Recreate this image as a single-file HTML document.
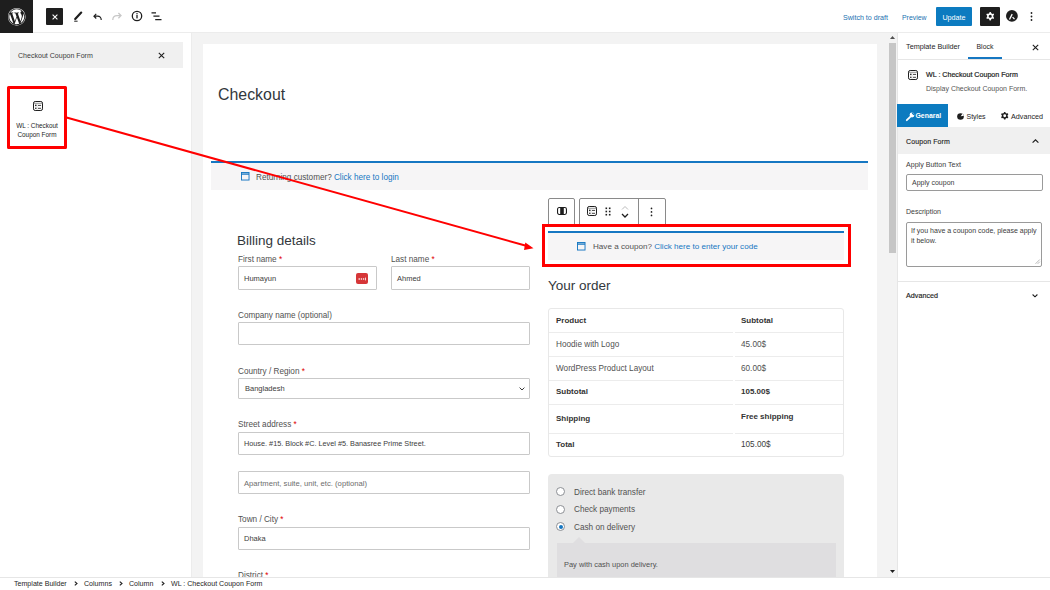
<!DOCTYPE html>
<html><head><meta charset="utf-8">
<style>
*{box-sizing:border-box;margin:0;padding:0}
html,body{width:1050px;height:590px;overflow:hidden;background:#fff;font-family:"Liberation Sans",sans-serif;color:#1e1e1e}
.a{position:absolute}
.t{position:absolute;white-space:nowrap;line-height:1}
svg{position:absolute;overflow:visible}
.inp{border:1px solid #c9c9c9;background:#fff;border-radius:1px}
.hr{left:549px;width:184px;height:1px;background:#ececec}
.hr2{position:absolute;left:735px;width:108px;height:1px;background:#ececec}
.b{font-size:8px;font-weight:bold;color:#333}
.r{font-size:8.2px;color:#515151}
.radio{width:9px;height:9px;border-radius:50%;border:1px solid #8c8f94;background:#fff}
</style></head><body>

<!-- HEADER -->
<div class="a" style="left:0;top:0;width:1050px;height:33px;background:#fff;border-bottom:1px solid #ececec"></div>
<div class="a" style="left:0;top:0;width:33px;height:33px;background:#1e1e1e"></div>
<svg style="left:8px;top:8px" width="17.5" height="17.5" viewBox="0 0 122.52 122.523"><g fill="#fff">
<path d="m8.708 61.26c0 20.802 12.089 38.779 29.619 47.298l-25.069-68.686c-2.916 6.536-4.55 13.769-4.55 21.388z"/>
<path d="m96.74 58.608c0-6.495-2.333-10.993-4.334-14.494-2.664-4.329-5.161-7.995-5.161-12.324 0-4.831 3.664-9.328 8.825-9.328.233 0 .454.029.681.042-9.35-8.566-21.807-13.796-35.489-13.796-18.36 0-34.513 9.42-43.91 23.688 1.233.037 2.395.063 3.382.063 5.497 0 14.006-.667 14.006-.667 2.833-.167 3.167 3.994.337 4.329 0 0-2.847.335-6.015.501l19.138 56.925 11.501-34.493-8.188-22.434c-2.830-.166-5.511-.501-5.511-.501-2.832-.166-2.500-4.496.332-4.329 0 0 8.679.667 13.843.667 5.496 0 14.006-.667 14.006-.667 2.835-.167 3.168 3.994.337 4.329 0 0-2.853.335-6.015.501l18.992 56.494 5.242-17.517c2.272-7.269 4.001-12.490 4.001-16.989z"/>
<path d="m62.184 65.857-15.768 45.819c4.708 1.384 9.687 2.141 14.846 2.141 6.12 0 11.989-1.058 17.452-2.979-.141-.225-.269-.464-.374-.724z"/>
<path d="m107.376 36.046c.226 1.674.354 3.471.354 5.404 0 5.333-.996 11.328-3.996 18.824l-16.053 46.413c15.624-9.111 26.133-26.038 26.133-45.426.001-9.137-2.333-17.729-6.438-25.215z"/>
<path d="m61.262 0c-33.779 0-61.262 27.481-61.262 61.26 0 33.783 27.483 61.263 61.262 61.263 33.778 0 61.265-27.48 61.265-61.263-.001-33.779-27.487-61.26-61.265-61.26zm0 119.715c-32.23 0-58.453-26.223-58.453-58.455 0-32.23 26.222-58.451 58.453-58.451 32.229 0 58.45 26.221 58.45 58.451 0 32.232-26.221 58.455-58.45 58.455z"/>
</g></svg>
<div class="a" style="left:46px;top:8px;width:17px;height:17px;background:#1e1e1e;border-radius:1px"></div>
<svg style="left:51.5px;top:13.5px" width="6" height="6" viewBox="0 0 6 6"><path d="M0.6 0.6L5.4 5.4M5.4 0.6L0.6 5.4" stroke="#fff" stroke-width="1.1"/></svg>
<!-- pencil -->
<svg style="left:73px;top:11px" width="10" height="11" viewBox="0 0 10 11"><path d="M2.2 8 L8.2 1.6" stroke="#1e1e1e" stroke-width="2.2" stroke-linecap="round"/><path d="M1.2 10.2 H4.6" stroke="#1e1e1e" stroke-width="1"/></svg>
<!-- undo -->
<svg style="left:93.3px;top:12.6px" width="9" height="8" viewBox="0 0 10 9"><path d="M9.2 8 C9.2 5 7.6 3.6 5 3.6 H1.2 M3.6 1 L1 3.6 L3.6 6.2" fill="none" stroke="#1e1e1e" stroke-width="1.3"/></svg>
<!-- redo -->
<svg style="left:112px;top:12px" width="10" height="9" viewBox="0 0 10 9"><path d="M0.8 8 C0.8 5 2.4 3.6 5 3.6 H8.8 M6.4 1 L9 3.6 L6.4 6.2" fill="none" stroke="#c8c8c8" stroke-width="1.3"/></svg>
<!-- info -->
<svg style="left:131px;top:10.4px" width="12" height="12" viewBox="0 0 12 12"><circle cx="6" cy="6" r="4.7" fill="none" stroke="#1e1e1e" stroke-width="1.3"/><rect x="5.35" y="5" width="1.3" height="3.4" fill="#1e1e1e"/><rect x="5.35" y="3.1" width="1.3" height="1.2" fill="#1e1e1e"/></svg>
<!-- list view -->
<svg style="left:151px;top:11px" width="11" height="10" viewBox="0 0 11 10"><path d="M0.5 1.8H5M2.4 5.2H8.5M4.2 8.6H10.5" stroke="#1e1e1e" stroke-width="1.2"/></svg>

<div class="t" style="left:843px;top:14.5px;font-size:7.1px;color:#2271b1">Switch to draft</div>
<div class="t" style="left:902px;top:14.5px;font-size:6.9px;color:#2271b1">Preview</div>
<div class="a" style="left:936px;top:7px;width:36px;height:19px;background:#0c7bc0;border-radius:1px"></div>
<div class="t" style="left:936px;top:13.5px;width:36px;text-align:center;font-size:7.2px;color:#fff">Update</div>
<div class="a" style="left:980px;top:7px;width:20px;height:19px;background:#1e1e1e;border-radius:1px"></div>
<svg style="left:983.7px;top:10.2px" width="12.5" height="12.5" viewBox="0 0 24 24"><path fill="#fff" fill-rule="evenodd" d="M10.289 4.836A1 1 0 0111.275 4h1.306a1 1 0 01.987.836l.244 1.466c.787.26 1.503.679 2.108 1.218l1.393-.522a1 1 0 011.216.437l.653 1.13a1 1 0 01-.23 1.273l-1.148.944a6.025 6.025 0 010 2.435l1.149.946a1 1 0 01.23 1.272l-.653 1.13a1 1 0 01-1.216.437l-1.394-.522c-.605.54-1.32.958-2.108 1.218l-.244 1.466a1 1 0 01-.987.836h-1.306a1 1 0 01-.986-.836l-.244-1.466a5.995 5.995 0 01-2.108-1.218l-1.394.522a1 1 0 01-1.217-.436l-.653-1.131a1 1 0 01.23-1.272l1.149-.946a6.026 6.026 0 010-2.435l-1.148-.944a1 1 0 01-.23-1.272l.653-1.131a1 1 0 011.217-.437l1.393.522a5.994 5.994 0 012.108-1.218l.244-1.466zM14.929 12a3 3 0 11-6 0 3 3 0 016 0z"/></svg>
<svg style="left:1006.3px;top:10.1px" width="12" height="12" viewBox="0 0 12 12"><circle cx="5.9" cy="5.9" r="5.9" fill="#1e1e1e"/><path d="M3.5 9.5 L6.2 4.1" stroke="#fff" stroke-width="1.3"/><path d="M6.6 7.1 L8.5 9.1" stroke="#fff" stroke-width="1.3"/></svg>
<svg style="left:1030px;top:12px" width="3" height="9" viewBox="0 0 3 9"><circle cx="1.5" cy="1" r="0.9" fill="#1e1e1e"/><circle cx="1.5" cy="4.5" r="0.9" fill="#1e1e1e"/><circle cx="1.5" cy="8" r="0.9" fill="#1e1e1e"/></svg>

<!-- LEFT PANEL -->
<div class="a" style="left:0;top:33px;width:192px;height:544px;background:#fff;border-right:1px solid #ececec"></div>
<div class="a" style="left:10px;top:42px;width:173px;height:26px;background:#f0f0f0"></div>
<div class="t" style="left:18px;top:52px;font-size:7.05px;color:#3c3c3c">Checkout Coupon Form</div>
<svg style="left:158px;top:52px" width="7" height="7" viewBox="0 0 7 7"><path d="M0.8 0.8L6.2 6.2M6.2 0.8L0.8 6.2" stroke="#1e1e1e" stroke-width="1.1"/></svg>


<!-- block item -->
<div class="a" style="left:7px;top:86px;width:60px;height:62.5px;border:3px solid #f00;border-radius:1.5px"></div>
<svg style="left:33px;top:101px" width="10" height="10" viewBox="0 0 10 10"><rect x="0.5" y="0.5" width="9" height="9" rx="1.7" fill="none" stroke="#1e1e1e" stroke-width="1"/><path d="M1 2.3H9" stroke="#666" stroke-width="0.7"/><path d="M4.1 2.6V9.2" stroke="#aaa" stroke-width="0.4"/><circle cx="2.8" cy="4.4" r="0.8" fill="#1e1e1e"/><circle cx="2.8" cy="7.3" r="0.8" fill="#1e1e1e"/><path d="M5 4.4H8.1M5 7.3H8.1" stroke="#1e1e1e" stroke-width="0.85"/></svg>
<div class="t" style="left:7px;top:123px;width:60px;text-align:center;font-size:6.4px;color:#1e1e1e">WL : Checkout</div>
<div class="t" style="left:7px;top:132px;width:60px;text-align:center;font-size:6.4px;color:#1e1e1e">Coupon Form</div>

<!-- CANVAS -->
<div class="a" style="left:192px;top:33px;width:705px;height:544px;background:#f3f3f3"></div>
<div class="a" style="left:203px;top:44px;width:674px;height:533px;background:#fff"></div>


<div class="t" style="left:218px;top:87px;font-size:15.9px;color:#32373c">Checkout</div>

<!-- returning customer -->
<div class="a" style="left:211px;top:161px;width:657px;height:29px;background:#f6f5f6;border-top:2px solid #1677c2"></div>
<svg style="left:240.5px;top:172px" width="8.5" height="8.5" viewBox="0 0 9 9"><rect x="0.5" y="0.5" width="8" height="8" fill="none" stroke="#1677c2" stroke-width="1"/><path d="M0.5 2.2H8.5" stroke="#1677c2" stroke-width="1.4"/></svg>
<div class="t" style="left:256px;top:173.5px;font-size:8.17px;color:#515151">Returning customer? <span style="color:#1677c2">Click here to login</span></div>

<!-- toolbar -->
<div class="a" style="left:548px;top:198px;width:27px;height:28px;background:#fff;border:1px solid #8a8a8a;border-radius:2px"></div>
<div class="a" style="left:579px;top:198px;width:87px;height:28px;background:#fff;border:1px solid #8a8a8a;border-radius:2px"></div>
<div class="a" style="left:638px;top:198px;width:1px;height:28px;background:#8a8a8a"></div>
<svg style="left:557px;top:207px" width="10" height="8" viewBox="0 0 10 8"><rect x="0.55" y="0.55" width="8.9" height="6.9" rx="1.6" fill="none" stroke="#1e1e1e" stroke-width="1.1"/><rect x="3.2" y="0.8" width="3.6" height="6.4" fill="#1e1e1e"/></svg>
<svg style="left:587px;top:206px" width="10" height="10" viewBox="0 0 10 10"><rect x="0.5" y="0.5" width="9" height="9" rx="1.7" fill="none" stroke="#1e1e1e" stroke-width="1"/><path d="M1 2.3H9" stroke="#666" stroke-width="0.7"/><path d="M4.1 2.6V9.2" stroke="#aaa" stroke-width="0.4"/><circle cx="2.8" cy="4.4" r="0.8" fill="#1e1e1e"/><circle cx="2.8" cy="7.3" r="0.8" fill="#1e1e1e"/><path d="M5 4.4H8.1M5 7.3H8.1" stroke="#1e1e1e" stroke-width="0.85"/></svg>
<svg style="left:605px;top:206.8px" width="6" height="9" viewBox="0 0 6 9"><g fill="#1e1e1e"><rect x="0.5" y="0.5" width="1.6" height="1.6"/><rect x="3.9" y="0.5" width="1.6" height="1.6"/><rect x="0.5" y="3.7" width="1.6" height="1.6"/><rect x="3.9" y="3.7" width="1.6" height="1.6"/><rect x="0.5" y="6.9" width="1.6" height="1.6"/><rect x="3.9" y="6.9" width="1.6" height="1.6"/></g></svg>
<svg style="left:620.5px;top:205px" width="8" height="15" viewBox="0 0 8 15"><path d="M1 4.5 L4 1.5 L7 4.5" fill="none" stroke="#bbb" stroke-width="1"/><path d="M1 9 L4 12 L7 9" fill="none" stroke="#1e1e1e" stroke-width="1.3"/></svg>
<svg style="left:650px;top:206.5px" width="3" height="10" viewBox="0 0 3 10"><circle cx="1.5" cy="1.4" r="0.85" fill="#1e1e1e"/><circle cx="1.5" cy="4.9" r="0.85" fill="#1e1e1e"/><circle cx="1.5" cy="8.4" r="0.85" fill="#1e1e1e"/></svg>

<!-- coupon -->
<div class="a" style="left:542px;top:224px;width:309px;height:43px;background:#fff;border:3px solid #f00"></div>
<div class="a" style="left:548px;top:231px;width:296px;height:29px;background:#f6f5f6;border-top:2px solid #1677c2"></div>
<svg style="left:577px;top:241.5px" width="8.5" height="8.5" viewBox="0 0 9 9"><rect x="0.5" y="0.5" width="8" height="8" fill="none" stroke="#1677c2" stroke-width="1"/><path d="M0.5 2.2H8.5" stroke="#1677c2" stroke-width="1.4"/></svg>
<div class="t" style="left:593px;top:243px;font-size:8.11px;color:#515151">Have a coupon? <span style="color:#1677c2">Click here to enter your code</span></div>

<div class="t" style="left:548px;top:279px;font-size:13.5px;color:#32373c">Your order</div>
<div class="t" style="left:237px;top:234px;font-size:13.5px;color:#32373c">Billing details</div>

<!-- billing fields -->
<div class="t" style="left:238px;top:256px;font-size:8.2px;color:#515151">First name <span style="color:#e00000">*</span></div>
<div class="a inp" style="left:238px;top:266px;width:139px;height:24px"></div>
<div class="t" style="left:244px;top:274.5px;font-size:7.5px;color:#3c3c3c">Humayun</div>
<div class="a" style="left:356px;top:272.5px;width:12px;height:11px;background:#d63638;border-radius:2px"></div>
<svg style="left:358px;top:276.5px" width="8" height="4" viewBox="0 0 8 4"><g fill="#fff"><circle cx="1.2" cy="2" r="0.8"/><circle cx="3.4" cy="2" r="0.8"/><circle cx="5.6" cy="2" r="0.8"/><rect x="7" y="0.6" width="0.8" height="2.8"/></g></svg>
<div class="t" style="left:391px;top:256px;font-size:8.2px;color:#515151">Last name <span style="color:#e00000">*</span></div>
<div class="a inp" style="left:391px;top:266px;width:139px;height:24px"></div>
<div class="t" style="left:397px;top:274.5px;font-size:7.5px;color:#3c3c3c">Ahmed</div>

<div class="t" style="left:238px;top:312px;font-size:8.17px;color:#515151">Company name (optional)</div>
<div class="a inp" style="left:238px;top:322px;width:292px;height:23px"></div>

<div class="t" style="left:238px;top:368px;font-size:8.2px;color:#515151">Country / Region <span style="color:#e00000">*</span></div>
<div class="a inp" style="left:238px;top:378px;width:292px;height:21px"></div>
<div class="t" style="left:245px;top:385px;font-size:7.5px;color:#3c3c3c">Bangladesh</div>
<svg style="left:519.3px;top:387.2px" width="6" height="4" viewBox="0 0 6 4"><path d="M0.6 0.6 L3 3 L5.4 0.6" fill="none" stroke="#3a3a3a" stroke-width="1"/></svg>

<div class="t" style="left:238px;top:421px;font-size:8.2px;color:#515151">Street address <span style="color:#e00000">*</span></div>
<div class="a inp" style="left:238px;top:432px;width:292px;height:23px"></div>
<div class="t" style="left:244px;top:440px;font-size:7.29px;color:#3c3c3c">House. #15. Block #C. Level #5. Banasree Prime Street.</div>

<div class="a inp" style="left:238px;top:471px;width:292px;height:23px"></div>
<div class="t" style="left:244px;top:479.5px;font-size:7.66px;color:#6d6d6d">Apartment, suite, unit, etc. (optional)</div>

<div class="t" style="left:238px;top:516px;font-size:8.2px;color:#515151">Town / City <span style="color:#e00000">*</span></div>
<div class="a inp" style="left:238px;top:527px;width:292px;height:23px"></div>
<div class="t" style="left:244px;top:534.5px;font-size:7.5px;color:#3c3c3c">Dhaka</div>

<div class="t" style="left:238px;top:571.5px;font-size:8.2px;color:#515151">District <span style="color:#e00000">*</span></div>

<!-- order table -->
<div class="a" style="left:548px;top:308px;width:296px;height:149px;border:1px solid #e8e8e8;border-radius:3px"></div>
<div class="a hr" style="top:332px"></div><div class="a hr2" style="top:332px"></div>
<div class="a hr" style="top:356px"></div><div class="a hr2" style="top:356px"></div>
<div class="a hr" style="top:380px"></div><div class="a hr2" style="top:380px"></div>
<div class="a hr" style="top:404px"></div><div class="a hr2" style="top:404px"></div>
<div class="a hr" style="top:433px"></div><div class="a hr2" style="top:433px"></div>
<div class="t b" style="left:556px;top:317px">Product</div>
<div class="t b" style="left:741px;top:317px">Subtotal</div>
<div class="t r" style="left:556px;top:341px">Hoodie with Logo</div>
<div class="t r" style="left:741px;top:341px">45.00$</div>
<div class="t r" style="left:556px;top:365px">WordPress Product Layout</div>
<div class="t r" style="left:741px;top:365px">60.00$</div>
<div class="t b" style="left:556px;top:388px">Subtotal</div>
<div class="t b" style="left:741px;top:388px">105.00$</div>
<div class="t b" style="left:556px;top:414.5px">Shipping</div>
<div class="t b" style="left:741px;top:413px">Free shipping</div>
<div class="t b" style="left:556px;top:441px">Total</div>
<div class="t r" style="left:741px;top:441px;color:#3c3c3c">105.00$</div>

<!-- payment -->
<div class="a" style="left:548px;top:474px;width:296px;height:110px;background:#e9e9e9;border-radius:4px"></div>
<div class="a radio" style="left:556px;top:487px"></div>
<div class="a radio" style="left:556px;top:504.5px"></div>
<div class="a radio" style="left:556px;top:522px"></div>
<div class="a" style="left:558.5px;top:524.5px;width:4px;height:4px;border-radius:50%;background:#1677c2"></div>
<div class="t r" style="left:574px;top:488.5px">Direct bank transfer</div>
<div class="t r" style="left:574px;top:506px">Check payments</div>
<div class="t r" style="left:574px;top:523.5px">Cash on delivery</div>
<div class="a" style="left:556.5px;top:543px;width:279.5px;height:40px;background:#dfdee0"></div>
<div class="a" style="left:572.5px;top:536.5px;width:0;height:0;border-left:6.5px solid transparent;border-right:6.5px solid transparent;border-bottom:6.5px solid #dfdee0"></div>
<div class="t" style="left:564px;top:560.5px;font-size:7.46px;color:#515151">Pay with cash upon delivery.</div>

<!-- scrollbar -->
<div class="a" style="left:888px;top:33px;width:9px;height:544px;background:#f3f3f3"></div>
<div class="a" style="left:888.5px;top:43px;width:7.5px;height:210px;background:#c6c6c6"></div>
<svg style="left:889.5px;top:36px" width="5" height="3" viewBox="0 0 5 3"><path d="M0 3L2.5 0L5 3Z" fill="#505050"/></svg>
<svg style="left:889.5px;top:570px" width="5" height="3" viewBox="0 0 5 3"><path d="M0 0L2.5 3L5 0Z" fill="#1e1e1e"/></svg>

<!-- RIGHT SIDEBAR -->
<div class="a" style="left:897px;top:33px;width:153px;height:544px;background:#fff;border-left:1px solid #e6e6e6"></div>


<div class="t" style="left:906px;top:43px;font-size:7.25px;color:#1e1e1e">Template Builder</div>
<div class="t" style="left:976.5px;top:44px;font-size:6.9px;color:#1e1e1e">Block</div>
<div class="a" style="left:968px;top:57px;width:34px;height:2px;background:#1677c2"></div>
<div class="a" style="left:898px;top:59px;width:152px;height:1px;background:#e6e6e6"></div>
<svg style="left:1032px;top:43.5px" width="7" height="7" viewBox="0 0 7 7"><path d="M0.8 0.8L6.2 6.2M6.2 0.8L0.8 6.2" stroke="#1e1e1e" stroke-width="1.1"/></svg>
<svg style="left:907.5px;top:70px" width="10" height="10" viewBox="0 0 10 10"><rect x="0.5" y="0.5" width="9" height="9" rx="1.7" fill="none" stroke="#1e1e1e" stroke-width="1"/><path d="M1 2.3H9" stroke="#666" stroke-width="0.7"/><path d="M4.1 2.6V9.2" stroke="#aaa" stroke-width="0.4"/><circle cx="2.8" cy="4.4" r="0.8" fill="#1e1e1e"/><circle cx="2.8" cy="7.3" r="0.8" fill="#1e1e1e"/><path d="M5 4.4H8.1M5 7.3H8.1" stroke="#1e1e1e" stroke-width="0.85"/></svg>
<div class="t" style="left:926px;top:72.2px;font-size:7.12px;color:#1e1e1e;-webkit-text-stroke:0.2px #1e1e1e">WL : Checkout Coupon Form</div>
<div class="t" style="left:926px;top:85.2px;font-size:7px;color:#555">Display Checkout Coupon Form.</div>

<div class="a" style="left:897px;top:104px;width:51px;height:23px;background:#0c7bc0"></div>
<svg style="left:906px;top:111.5px" width="9" height="9" viewBox="0 0 9 9"><path d="M0.8 8.2 L4.2 4.8" stroke="#fff" stroke-width="1.8" stroke-linecap="round"/><circle cx="6" cy="3" r="2.4" fill="#fff"/><path d="M6.4 0.2 L8.8 2.6 L7.6 3.2 L5.8 1.4Z" fill="#0c7bc0"/></svg>
<div class="t" style="left:915.5px;top:112.8px;font-size:6.9px;font-weight:bold;color:#fff">Genaral</div>
<svg style="left:956.5px;top:112.5px" width="7" height="7" viewBox="0 0 8 8"><circle cx="4" cy="4" r="3.8" fill="#1e1e1e"/><path d="M4.2 3.6 L7.9 3 A3.9 3.9 0 0 0 6.2 0.8Z" fill="#fff"/></svg>
<div class="t" style="left:966.5px;top:112.5px;font-size:7px;color:#1e1e1e">Styles</div>
<svg style="left:998.8px;top:110.4px" width="11.5" height="11.5" viewBox="0 0 24 24"><path fill="#1e1e1e" fill-rule="evenodd" d="M10.289 4.836A1 1 0 0111.275 4h1.306a1 1 0 01.987.836l.244 1.466c.787.26 1.503.679 2.108 1.218l1.393-.522a1 1 0 011.216.437l.653 1.13a1 1 0 01-.23 1.273l-1.148.944a6.025 6.025 0 010 2.435l1.149.946a1 1 0 01.23 1.272l-.653 1.13a1 1 0 01-1.216.437l-1.394-.522c-.605.54-1.32.958-2.108 1.218l-.244 1.466a1 1 0 01-.987.836h-1.306a1 1 0 01-.986-.836l-.244-1.466a5.995 5.995 0 01-2.108-1.218l-1.394.522a1 1 0 01-1.217-.436l-.653-1.131a1 1 0 01.23-1.272l1.149-.946a6.026 6.026 0 010-2.435l-1.148-.944a1 1 0 01-.23-1.272l.653-1.131a1 1 0 011.217-.437l1.393.522a5.994 5.994 0 012.108-1.218l.244-1.466zM14.929 12a3 3 0 11-6 0 3 3 0 016 0z"/></svg>
<div class="t" style="left:1011px;top:112.5px;font-size:7.2px;color:#1e1e1e">Advanced</div>

<div class="a" style="left:898px;top:127px;width:152px;height:27px;background:#f0f0f0"></div>
<div class="t" style="left:906px;top:137.8px;font-size:7px;color:#2a2a2a;-webkit-text-stroke:0.15px #2a2a2a;letter-spacing:0.1px">Coupon Form</div>
<svg style="left:1032px;top:139px" width="7" height="4" viewBox="0 0 7 4"><path d="M0.6 3.6 L3.5 0.8 L6.4 3.6" fill="none" stroke="#1e1e1e" stroke-width="1.2"/></svg>
<div class="t" style="left:906px;top:162px;font-size:7.08px;color:#3c3c3c">Apply Button Text</div>
<div class="a" style="left:906px;top:174px;width:137px;height:17px;border:1px solid #9a9a9a;border-radius:2px"></div>
<div class="t" style="left:912px;top:179px;font-size:7px;color:#3c3c3c">Apply coupon</div>
<div class="t" style="left:906px;top:208px;font-size:7px;color:#3c3c3c">Description</div>
<div class="a" style="left:906px;top:221.5px;width:136px;height:45px;border:1px solid #9a9a9a;border-radius:2px"></div>
<div class="t" style="left:911px;top:227px;font-size:7.02px;color:#3c3c3c">If you have a coupon code, please apply</div>
<div class="t" style="left:911px;top:236.5px;font-size:7.02px;color:#3c3c3c">it below.</div>
<svg style="left:1035px;top:259px" width="5" height="5" viewBox="0 0 5 5"><path d="M0.5 4.8L4.8 0.5M2.7 4.8L4.8 2.7" stroke="#999" stroke-width="0.7"/></svg>
<div class="a" style="left:898px;top:281px;width:152px;height:1px;background:#e6e6e6"></div>
<div class="t" style="left:906px;top:291.8px;font-size:7.19px;color:#1e1e1e;-webkit-text-stroke:0.15px #1e1e1e">Advanced</div>
<svg style="left:1032.3px;top:294.2px" width="6" height="4" viewBox="0 0 6 4"><path d="M0.6 0.5 L3 2.8 L5.4 0.5" fill="none" stroke="#1e1e1e" stroke-width="1.1"/></svg>

<!-- BOTTOM BAR -->
<div class="a" style="left:0;top:577px;width:1050px;height:13px;background:#fff;border-top:1px solid #e6e6e6"></div>


<div class="t" style="left:14px;top:581px;font-size:7.09px;color:#1e1e1e">Template Builder</div>
<svg class="chev" style="left:74px;top:581.3px" width="4" height="5" viewBox="0 0 4 5"><path d="M0.8 0.6L3 2.5L0.8 4.4" fill="none" stroke="#1e1e1e" stroke-width="1.1"/></svg>
<div class="t" style="left:84px;top:581px;font-size:7.09px;color:#1e1e1e">Columns</div>
<svg class="chev" style="left:119px;top:581.3px" width="4" height="5" viewBox="0 0 4 5"><path d="M0.8 0.6L3 2.5L0.8 4.4" fill="none" stroke="#1e1e1e" stroke-width="1.1"/></svg>
<div class="t" style="left:129px;top:581px;font-size:7.09px;color:#1e1e1e">Column</div>
<svg class="chev" style="left:161px;top:581.3px" width="4" height="5" viewBox="0 0 4 5"><path d="M0.8 0.6L3 2.5L0.8 4.4" fill="none" stroke="#1e1e1e" stroke-width="1.1"/></svg>
<div class="t" style="left:171px;top:581px;font-size:7.09px;color:#1e1e1e">WL : Checkout Coupon Form</div>

<!-- ARROW -->
<svg style="left:0;top:0" width="1050" height="590" viewBox="0 0 1050 590"><path d="M66.5 117.5 L527 246" stroke="#f00" stroke-width="2"/><path d="M533.5 248.3 L525.3 242.6 L524 250 Z" fill="#f00"/></svg>

</body></html>
